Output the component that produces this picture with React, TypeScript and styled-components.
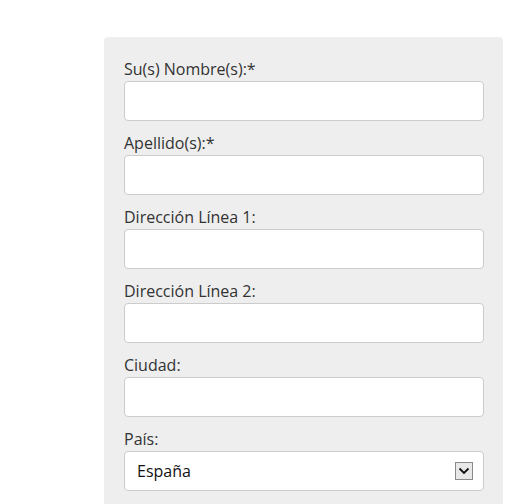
import styled, { createGlobalStyle } from 'styled-components'

const GlobalStyle = createGlobalStyle`
  html, body {
    margin: 0;
    padding: 0;
    background: #ffffff;
  }
  body {
    font-family: "Open Sans", "Liberation Sans", sans-serif;
  }
`

const fields = [
  'Su(s) Nombre(s):*',
  'Apellido(s):*',
  'Dirección Línea 1:',
  'Dirección Línea 2:',
  'Ciudad:',
]

export default function App() {
  return (
    <>
      <GlobalStyle />
      <Page>
        <FormPanel>
          {fields.map((label) => (
            <Field key={label}>
              <Label>{label}</Label>
              <TextInput type="text" />
            </Field>
          ))}
          <Field>
            <Label>País:</Label>
            <SelectWrap>
              <Select defaultValue="es">
                <option value="es">España</option>
              </Select>
              <ArrowBox>
                <svg width="12" height="8" viewBox="0 0 12 8">
                  <path d="M1.5 1.5 L6 6 L10.5 1.5" fill="none" stroke="#111" strokeWidth="1.8" />
                </svg>
              </ArrowBox>
            </SelectWrap>
          </Field>
        </FormPanel>
      </Page>
    </>
  )
}

const Page = styled.div`
  padding: 37px 15px 0 104px;
  height: 504px;
  box-sizing: border-box;
  overflow: hidden;
`

const FormPanel = styled.form`
  width: 399px;
  box-sizing: border-box;
  padding: 21px 19px 20px 20px;
  background: #eeeeee;
  border-radius: 4px;
  display: flex;
  flex-direction: column;
  gap: 11px;
`

const Field = styled.div`
  display: flex;
  flex-direction: column;
  gap: 1px;
`

const Label = styled.label`
  font-size: 16px;
  line-height: 22px;
  color: #333333;
`

const TextInput = styled.input`
  height: 40px;
  box-sizing: border-box;
  border: 1px solid #cccccc;
  border-radius: 4px;
  background: #ffffff;
  padding: 0 12px;
  font-family: inherit;
  font-size: 16px;
  outline: none;
`

const SelectWrap = styled.div`
  position: relative;
`

const Select = styled.select`
  width: 100%;
  height: 40px;
  box-sizing: border-box;
  border: 1px solid #cccccc;
  border-radius: 4px;
  background: #ffffff;
  padding: 0 12px;
  font-family: inherit;
  font-size: 16px;
  color: #111111;
  appearance: none;
  outline: none;
`

const ArrowBox = styled.span`
  position: absolute;
  right: 11px;
  top: 11px;
  width: 18px;
  height: 18px;
  box-sizing: border-box;
  border: 1px solid #8a8a8a;
  background: #e8e8e8;
  display: flex;
  align-items: center;
  justify-content: center;
  pointer-events: none;
`
